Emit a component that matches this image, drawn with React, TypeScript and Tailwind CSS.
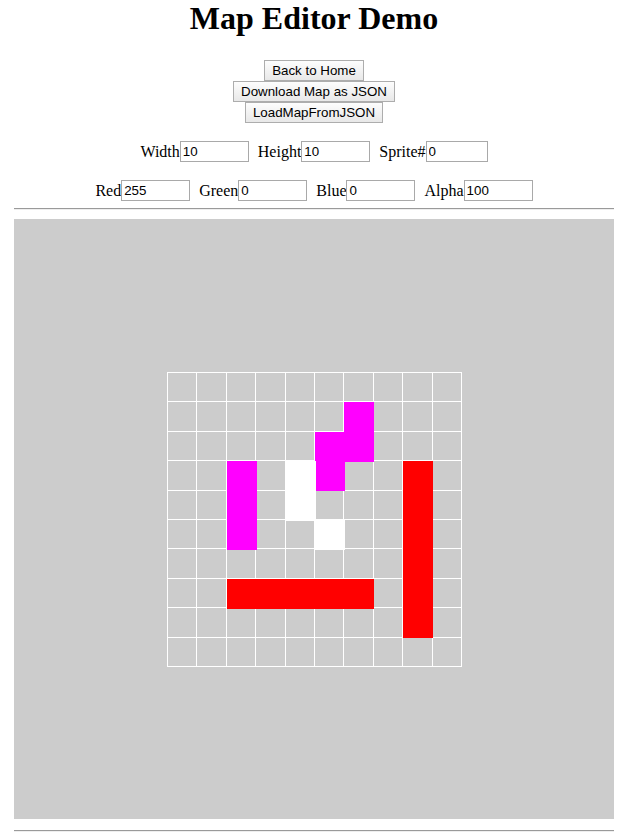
import React, { useState } from 'react';

const CELL = 29.4;
const SIZE = 10;

type Fill = { c: number; r: number; color: string };

const MAGENTA = '#ff00ff';
const RED = '#ff0000';
const WHITE = '#ffffff';

const fills: Fill[] = [
  { c: 6, r: 1, color: MAGENTA },
  { c: 5, r: 2, color: MAGENTA },
  { c: 6, r: 2, color: MAGENTA },
  { c: 5, r: 3, color: MAGENTA },
  { c: 2, r: 3, color: MAGENTA },
  { c: 2, r: 4, color: MAGENTA },
  { c: 2, r: 5, color: MAGENTA },
  { c: 4, r: 3, color: WHITE },
  { c: 4, r: 4, color: WHITE },
  { c: 5, r: 5, color: WHITE },
  ...[2, 3, 4, 5, 6].map((c) => ({ c, r: 7, color: RED })),
  ...[3, 4, 5, 6, 7, 8].map((r) => ({ c: 8, r, color: RED })),
];

const Field: React.FC<{ label: string; value: string; onChange: (v: string) => void; narrow?: boolean }> = ({
  label,
  value,
  onChange,
  narrow,
}) => (
  <div className="flex items-center">
    <span className="text-[16px] leading-[21px]">{label}</span>
    <input
      value={value}
      onChange={(e) => onChange(e.target.value)}
      className={`${narrow ? 'w-[62px]' : 'w-[69px]'} h-[21px] border border-[#a9a9a9] bg-white px-[2px] text-[13.333px] font-['Liberation_Sans',Arial,sans-serif] outline-none`}
    />
  </div>
);

const MapGrid: React.FC = () => {
  const total = CELL * SIZE;
  const lines = Array.from({ length: SIZE + 1 }, (_, i) => i * CELL + 0.5);
  return (
    <svg width={total + 1} height={total + 1} shapeRendering="crispEdges">
      {lines.map((p, i) => (
        <g key={i}>
          <line x1={p} y1={0} x2={p} y2={total + 1} stroke="#ffffff" strokeWidth={1} />
          <line x1={0} y1={p} x2={total + 1} y2={p} stroke="#ffffff" strokeWidth={1} />
        </g>
      ))}
      {fills.map((f, i) => (
        <rect
          key={i}
          x={f.c * CELL + 1}
          y={f.r * CELL + 1}
          width={CELL + 0.6}
          height={CELL + 0.6}
          fill={f.color}
        />
      ))}
    </svg>
  );
};

const btn =
  "h-[21px] px-[7px] border border-[#adadad] bg-gradient-to-b from-[#fdfdfd] to-[#e8e8e8] text-[13.333px] leading-[19px] text-black font-['Liberation_Sans',Arial,sans-serif]";

export default function App() {
  const [width, setWidth] = useState('10');
  const [height, setHeight] = useState('10');
  const [sprite, setSprite] = useState('0');
  const [red, setRed] = useState('255');
  const [green, setGreen] = useState('0');
  const [blue, setBlue] = useState('0');
  const [alpha, setAlpha] = useState('100');

  return (
    <div className="w-full bg-white text-black font-['Liberation_Serif','Times_New_Roman',serif]">
      <h1 className="text-center text-[32px] font-bold leading-[37px]">Map Editor Demo</h1>

      <div className="mt-[23px] flex flex-col items-center">
        <button className={btn}>Back to Home</button>
        <button className={btn}>Download Map as JSON</button>
        <button className={btn}>LoadMapFromJSON</button>
      </div>

      <div className="mt-[18px] flex justify-center gap-[9px]">
        <Field label="Width" value={width} onChange={setWidth} />
        <Field label="Height" value={height} onChange={setHeight} />
        <Field label="Sprite#" value={sprite} onChange={setSprite} narrow />
      </div>

      <div className="mt-[18px] flex justify-center gap-[9px]">
        <Field label="Red" value={red} onChange={setRed} />
        <Field label="Green" value={green} onChange={setGreen} />
        <Field label="Blue" value={blue} onChange={setBlue} />
        <Field label="Alpha" value={alpha} onChange={setAlpha} />
      </div>

      <div className="mx-auto mt-[7px] w-[600px] border-t border-b border-t-[#9a9a9a] border-b-[#eeeeee]" />

      <div className="mx-auto mt-[9px] flex h-[600px] w-[600px] items-center justify-center bg-[#cccccc]">
        <MapGrid />
      </div>

      <div className="mx-auto mt-[11px] w-[600px] border-t border-b border-t-[#9a9a9a] border-b-[#eeeeee]" />
    </div>
  );
}
